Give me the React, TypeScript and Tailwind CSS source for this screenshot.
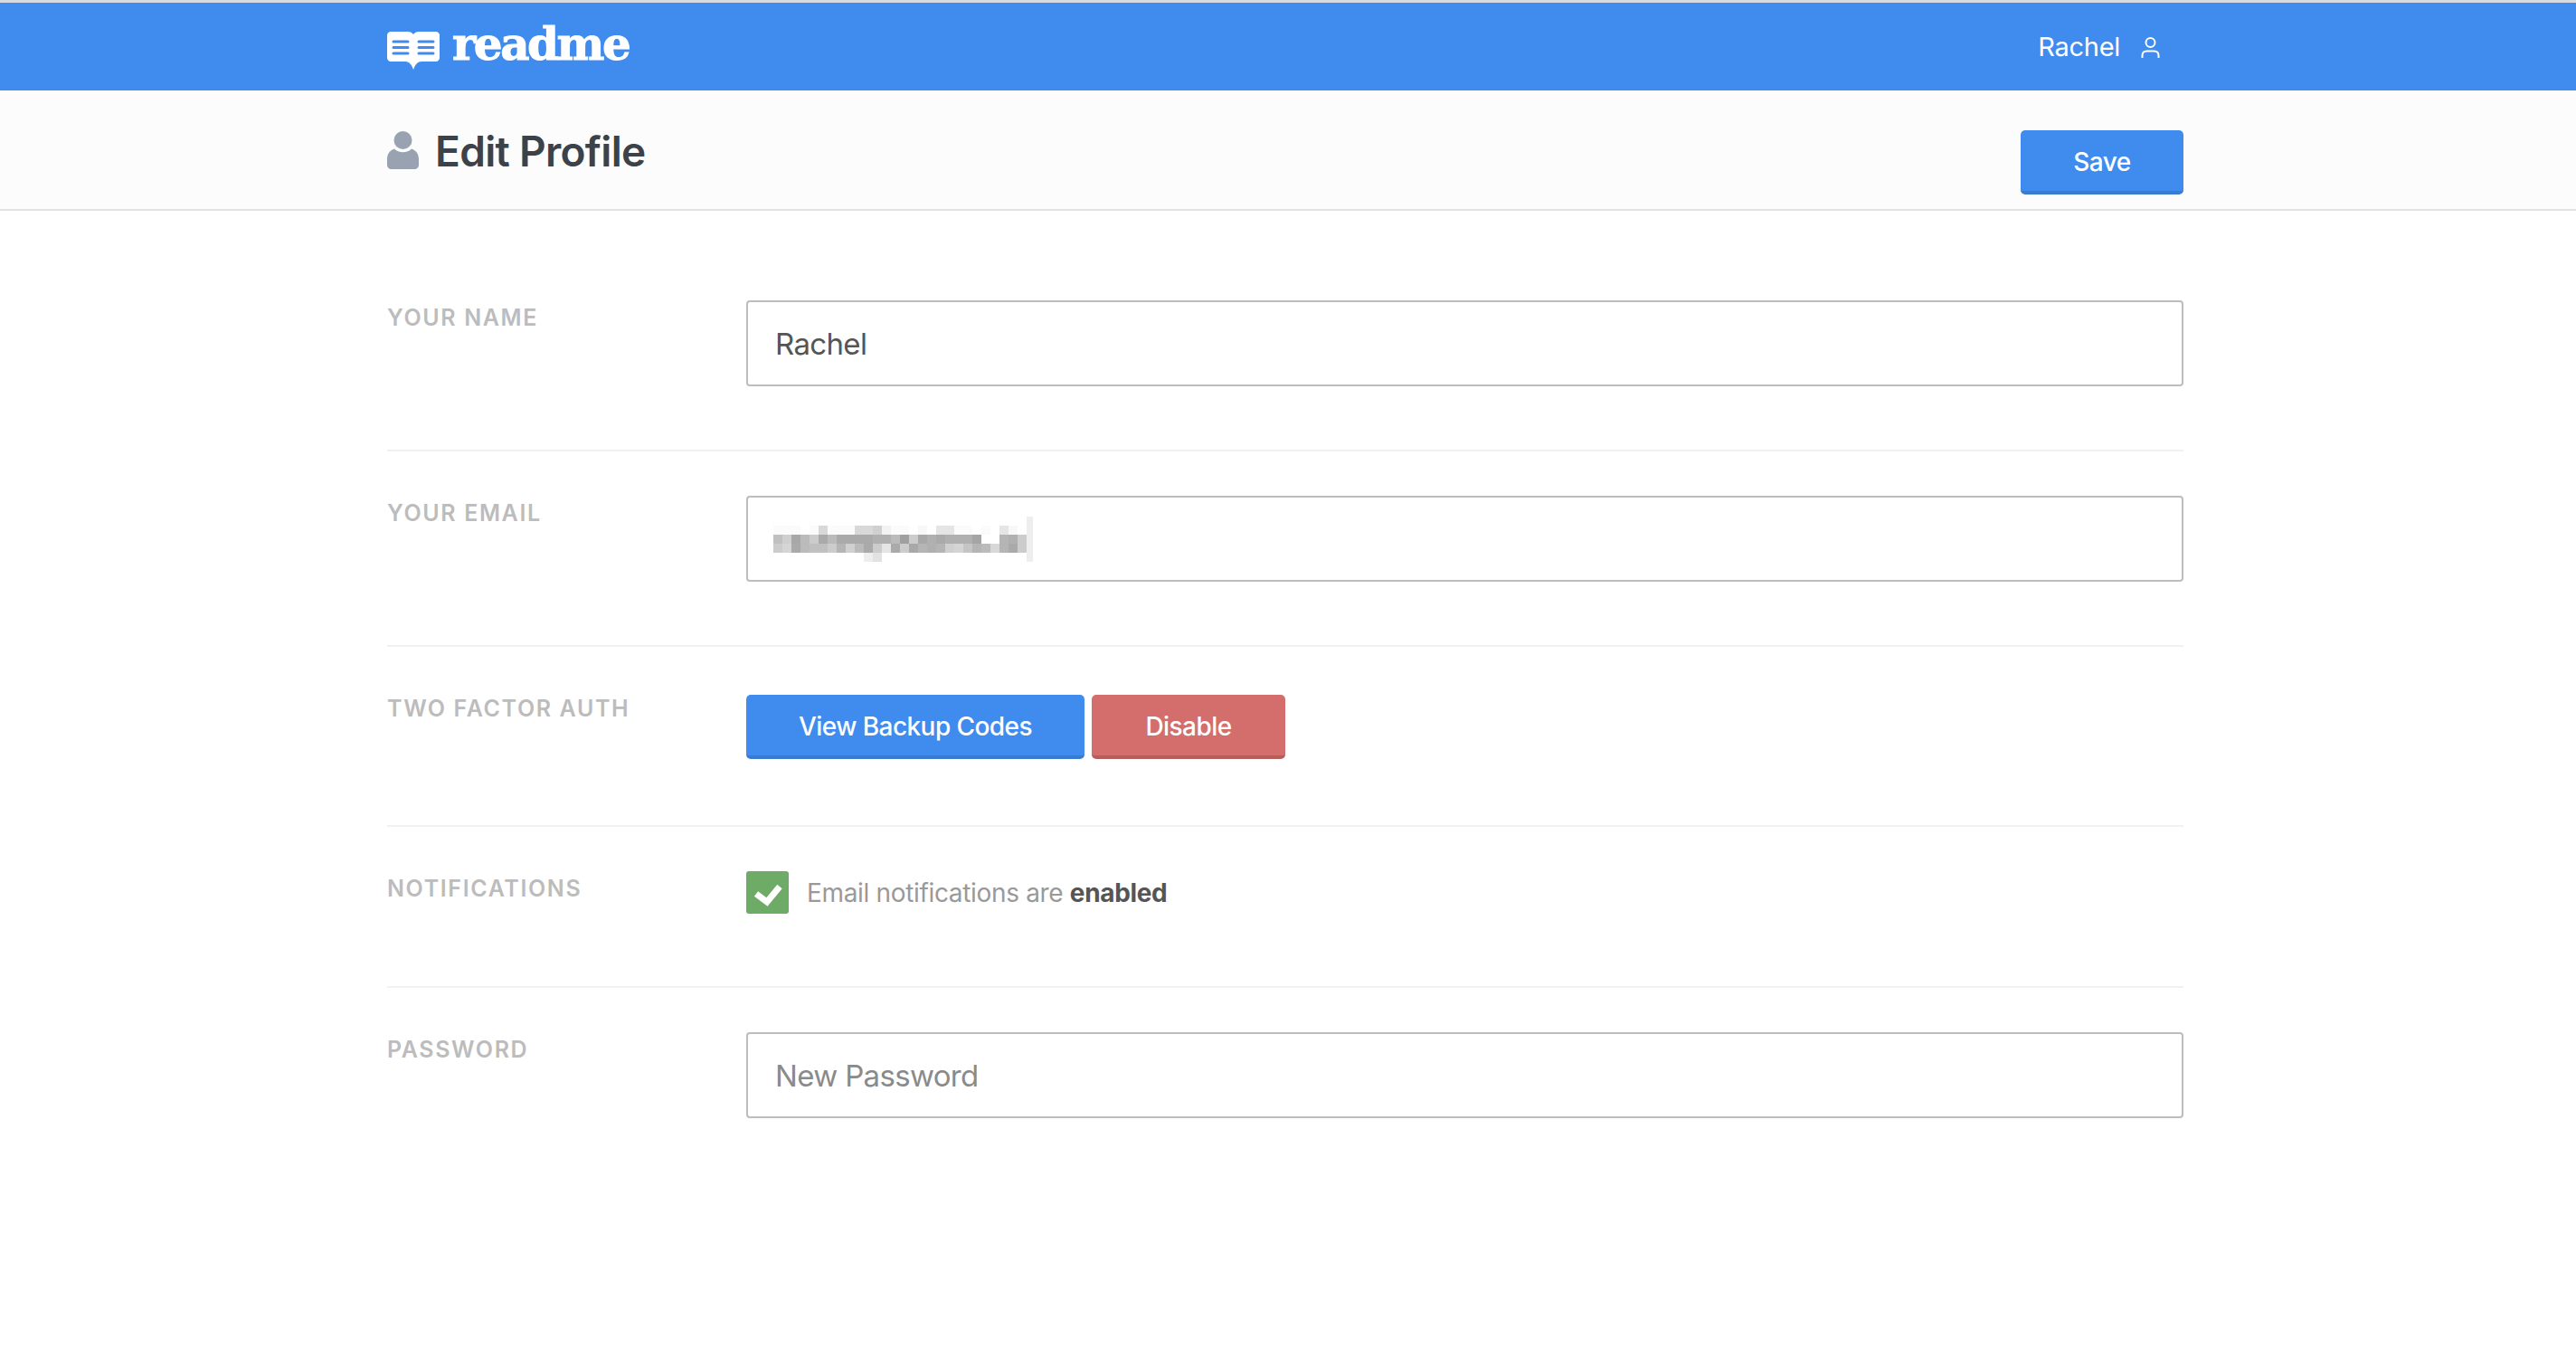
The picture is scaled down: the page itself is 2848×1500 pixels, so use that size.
import React from "react";

const sans = "font-['Inter','Liberation_Sans',sans-serif]";

// censored email, each cell is a 10px mosaic block, 0 = nothing
const mosaic: number[][] = [
  [0xfb, 0xfb, 0xfb, 0, 0xfb, 0xd8, 0xfb, 0xfb, 0xfb, 0xd8, 0xd8, 0xd0, 0xf3, 0xfb, 0xfb, 0, 0xf8, 0, 0xe5, 0xe5, 0xfb, 0xfb, 0, 0xfb, 0, 0xe5, 0xf8, 0],
  [0xc0, 0xcf, 0xa8, 0xbb, 0xcc, 0xaa, 0xbb, 0xaa, 0xaa, 0xaa, 0xaa, 0xb0, 0xb0, 0xbb, 0xa0, 0xcc, 0xa8, 0xb0, 0xaa, 0xb0, 0xb0, 0xb0, 0xa5, 0, 0, 0xb5, 0xb0, 0xcc],
  [0xcc, 0xd5, 0xaa, 0xbb, 0xc0, 0xc0, 0xcc, 0xb5, 0xd0, 0xbb, 0xaa, 0xcc, 0xe5, 0xaa, 0xcc, 0xa8, 0xb5, 0xb0, 0xb5, 0xd0, 0xd5, 0xc5, 0xb5, 0xbb, 0xd8, 0xb5, 0xaa, 0xcc],
  [0, 0, 0, 0, 0, 0, 0, 0, 0, 0, 0xee, 0xe2, 0, 0, 0, 0, 0, 0, 0, 0, 0, 0, 0, 0, 0, 0, 0, 0],
];

const grey = (v: number) => `rgb(${v},${v},${v})`;

function BookLogo() {
  return (
    <svg width="58" height="42" viewBox="0 0 58 42" className="mt-[32px] shrink-0">
      <path
        d="M4 0h19c2.500 0 4.500 1 6 3 1.500-2 3.500-3 6-3h19c2.200 0 4 1.800 4 4v25c0 2.200-1.800 4-4 4H38c-4 0-7 3-9 9-2-6-5-9-9-9H4c-2.200 0-4-1.800-4-4V4c0-2.200 1.800-4 4-4z"
        fill="#fff"
      />
      <path
        d="M7 11h16M7 17.500h16M7 24h16M35 11h16M35 17.500h16M35 24h16"
        stroke="#408cee"
        strokeWidth="3"
        strokeLinecap="round"
      />
    </svg>
  );
}

function UserOutline() {
  return (
    <svg width="22" height="24" viewBox="0 0 22 24" fill="none" stroke="#fff" strokeWidth="2" className="shrink-0">
      <circle cx="10.500" cy="7" r="5" />
      <path d="M1.500 24v-2.500c0-3 2-5 5-5h8c3 0 5 2 5 5V24" />
    </svg>
  );
}

function UserSolid() {
  return (
    <svg width="35" height="42" viewBox="0 0 35 42" className="shrink-0">
      <circle cx="17.500" cy="10" r="10" fill="#98a2b0" />
      <path
        d="M8 19.500c2.500 2.500 5.500 3.800 9.500 3.800s7-1.300 9.500-3.800c5 1.500 8 6 8 11.500v6c0 3-2 5-5 5H5c-3 0-5-2-5-5v-6c0-5.500 3-10 8-11.500z"
        fill="#98a2b0"
      />
    </svg>
  );
}

function Row({ label, children, pt = "pt-[49px]", pb, last }: { label: string; children: React.ReactNode; pt?: string; pb: string; last?: boolean }) {
  return (
    <div className={`flex ${pt} ${pb} ${last ? "" : "border-b-2 border-[#f1f1f1]"}`}>
      <div className="w-[397px] shrink-0 pt-[4px] text-[25px] leading-[30px] font-semibold tracking-[0.065em] text-[#bcbcbc]">{label}</div>
      <div className="flex-1">{children}</div>
    </div>
  );
}

const inputBox = "flex h-[95px] w-full items-center rounded-[4px] border-2 border-[#bdbdbd] bg-white px-[30px] pt-[2px] text-[33px] tracking-[-0.02em]";
const btn = "h-[71px] rounded-[5px] border-b-4 pt-[2px] text-[28px] font-medium tracking-[-0.02em] text-white";

export default function App() {
  return (
    <div className={`${sans} min-h-[1500px] bg-white`}>
      <header className="h-[100px] border-t-[3px] border-[#d5dae0] bg-[#408cee]">
        <div className="ml-[428px] flex h-full w-[1986px] items-start justify-between">
          <div className="flex items-start gap-[14px]">
            <BookLogo />
            <span className="mt-[21px] font-['DejaVu_Serif',serif] text-[50px] leading-none font-bold tracking-[-0.05em] text-white [-webkit-text-stroke:1px_white]">
              readme
            </span>
          </div>
          <div className="flex h-full items-center gap-[23px] pr-[25px] text-[29px] tracking-[-0.01em] text-white">
            <span>Rachel</span>
            <UserOutline />
          </div>
        </div>
      </header>

      <div className="h-[133px] border-b-2 border-[#e2e2e2] bg-[#fcfcfc]">
        <div className="ml-[428px] flex w-[1986px] items-start justify-between">
          <div className="flex items-start gap-[18px]">
            <div className="pt-[45px]">
              <UserSolid />
            </div>
            <h1 className="pt-[39px] text-[46px] leading-[56px] font-semibold tracking-[-0.015em] text-[#3c4249]">Edit Profile</h1>
          </div>
          <button className={`${btn} mt-[44px] w-[180px] border-[#3a7ad0] bg-[#408cee]`}>Save</button>
        </div>
      </div>

      <main className="ml-[428px] w-[1986px]">
        <Row label="YOUR NAME" pt="pt-[99px]" pb="pb-[70px]">
          <div className={`${inputBox} text-[#555]`}>Rachel</div>
        </Row>
        <Row label="YOUR EMAIL" pb="pb-[70px]">
          <div className={inputBox}>
            <svg width="290" height="50" viewBox="0 0 290 50" aria-label="censored email" className="-mt-[2px] -ml-[2px]">
              {mosaic.map((row, y) =>
                row.map((v, x) => (v ? <rect key={`${x}-${y}`} x={x * 10} y={10 + y * 10} width="10" height="10" fill={grey(v)} /> : null)),
              )}
              <rect x="280" y="0" width="7" height="50" fill="#eee" />
            </svg>
          </div>
        </Row>
        <Row label="TWO FACTOR AUTH" pb="pb-[73px]">
          <div className="mt-[4px] flex gap-[8px]">
            <button className={`${btn} w-[374px] border-[#3a7ad0] bg-[#408cee]`}>View Backup Codes</button>
            <button className={`${btn} w-[214px] border-[#b55f5d] bg-[#d36e6c]`}>Disable</button>
          </div>
        </Row>
        <Row label="NOTIFICATIONS" pb="pb-[80px]">
          <div className="flex items-center gap-[20px]">
            <div className="flex h-[47px] w-[47px] items-center justify-center rounded-[3px] bg-[#6dab67]">
              <svg width="47" height="47" viewBox="0 0 47 47" fill="none" stroke="#fff" strokeWidth="7">
                <path d="M11 25l12 9 14-17" />
              </svg>
            </div>
            <span className="text-[28px] tracking-[-0.012em] text-[#999]">
              Email notifications are <b className="font-bold text-[#555]">enabled</b>
            </span>
          </div>
        </Row>
        <Row label="PASSWORD" pb="pb-[0px]" last>
          <div className={`${inputBox} text-[#8a8a8a]`}>New Password</div>
        </Row>
      </main>
    </div>
  );
}
